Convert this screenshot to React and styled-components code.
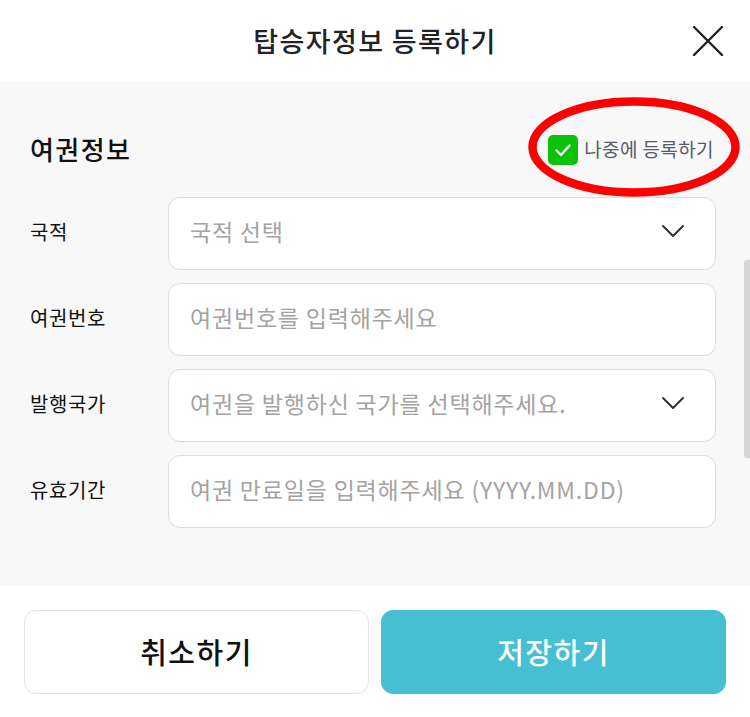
import React from "react";
import styled, { createGlobalStyle } from "styled-components";

const Global = createGlobalStyle`
  html, body { margin: 0; padding: 0; background: #fff; }
  body { font-family: "Noto Sans CJK KR", "Noto Sans", sans-serif; }
  * { box-sizing: border-box; }
`;

const Modal = styled.div`
  width: 750px;
  height: 717px;
  display: flex;
  flex-direction: column;
  background: #fff;
  position: relative;
  overflow: hidden;
`;

const Header = styled.header`
  height: 82px;
  flex: none;
  display: flex;
  align-items: center;
  justify-content: center;
  position: relative;
  background: #fff;
`;

const Title = styled.h1`
  margin: 0 0 2px 0;
  font-size: 27px;
  font-weight: 500;
  color: #222;
  letter-spacing: 1.4px;
`;

const CloseButton = styled.button`
  position: absolute;
  right: 26px;
  top: 25px;
  width: 32px;
  height: 32px;
  padding: 0;
  border: none;
  background: transparent;
  display: flex;
  align-items: center;
  justify-content: center;
`;

const Body = styled.main`
  flex: 1;
  background: #f8f8f8;
  padding: 46px 34px 0 30px;
  position: relative;
`;

const SectionHead = styled.div`
  display: flex;
  align-items: center;
  justify-content: space-between;
  height: 44px;
  margin-bottom: 25px;
  position: relative;
`;

const SectionTitle = styled.h2`
  margin: 0 0 3px 0;
  font-size: 26px;
  font-weight: 500;
  color: #111;
  letter-spacing: 1.4px;
`;

const Later = styled.label`
  display: flex;
  align-items: center;
  gap: 6px;
  font-size: 19px;
  color: #555b6a;
  letter-spacing: 0.4px;
  margin-right: 2px;
  margin-bottom: 4px;
`;

const Check = styled.span`
  width: 30px;
  height: 30px;
  border-radius: 5px;
  background: #0ac20a;
  display: flex;
  align-items: center;
  justify-content: center;
  margin-top: 4px;
`;

const Ellipse = styled.svg`
  position: absolute;
  right: -24px;
  top: -31px;
  pointer-events: none;
`;

const Rows = styled.div`
  display: flex;
  flex-direction: column;
  gap: 13px;
`;

const Row = styled.div`
  display: grid;
  grid-template-columns: 138px 1fr;
  align-items: center;
`;

const Label = styled.span`
  font-size: 20px;
  color: #111;
  letter-spacing: 0.6px;
  margin-top: -5px;
`;

const Field = styled.div`
  height: 73px;
  border: 1px solid #dcdcdc;
  border-radius: 12px;
  background: #fff;
  display: flex;
  align-items: center;
  justify-content: space-between;
  padding: 0 30px 5px 21px;
`;

const Placeholder = styled.span`
  font-size: 23px;
  color: #a3a3a3;
  letter-spacing: 0.8px;
`;

const Scrollbar = styled.div`
  position: absolute;
  right: 0;
  top: 178px;
  width: 6px;
  height: 198px;
  border-radius: 3px 0 0 3px;
  background: #d6d6d6;
`;

const Footer = styled.footer`
  height: 131px;
  flex: none;
  background: #fff;
  display: grid;
  grid-template-columns: 1fr 1fr;
  gap: 12px;
  padding: 24px 24px 23px 24px;
`;

const Button = styled.button`
  height: 84px;
  border-radius: 12px;
  font-family: inherit;
  font-size: 29px;
  font-weight: 500;
  letter-spacing: 1.5px;
  padding-bottom: 4px;
  border: 1px solid ${(p) => (p.$primary ? "#45bfd1" : "#e4e4e4")};
  background: ${(p) => (p.$primary ? "#45bfd1" : "#fff")};
  color: ${(p) => (p.$primary ? "#fff" : "#111")};
`;

const Chevron = () => (
  <svg width="24" height="14" viewBox="0 0 24 14" fill="none">
    <path d="M2 2 L12 12 L22 2" stroke="#333" strokeWidth="2" strokeLinecap="round" strokeLinejoin="round" />
  </svg>
);

const rows = [
  { label: "국적", ph: "국적 선택", select: true },
  { label: "여권번호", ph: "여권번호를 입력해주세요" },
  { label: "발행국가", ph: "여권을 발행하신 국가를 선택해주세요.", select: true },
  { label: "유효기간", ph: "여권 만료일을 입력해주세요 (YYYY.MM.DD)" },
];

export default function App() {
  return (
    <>
      <Global />
      <Modal>
        <Header>
          <Title>탑승자정보 등록하기</Title>
          <CloseButton aria-label="닫기">
            <svg width="32" height="32" viewBox="0 0 32 32">
              <path d="M2 2 L30 30 M30 2 L2 30" stroke="#222" strokeWidth="2.4" strokeLinecap="round" />
            </svg>
          </CloseButton>
        </Header>
        <Body>
          <SectionHead>
            <SectionTitle>여권정보</SectionTitle>
            <Later>
              <Check>
                <svg width="20" height="20" viewBox="0 0 20 20">
                  <path d="M3.5 10.5 L8 15 L16.5 5.5" stroke="#fff" strokeWidth="2.4" fill="none" strokeLinecap="round" strokeLinejoin="round" />
                </svg>
              </Check>
              나중에 등록하기
            </Later>
            <Ellipse width="212" height="100" viewBox="0 0 212 100">
              <ellipse cx="106" cy="50" rx="101.5" ry="45.5" fill="none" stroke="#f00" strokeWidth="8.5" />
            </Ellipse>
          </SectionHead>
          <Rows>
            {rows.map((r) => (
              <Row key={r.label}>
                <Label>{r.label}</Label>
                <Field>
                  <Placeholder>{r.ph}</Placeholder>
                  {r.select && <Chevron />}
                </Field>
              </Row>
            ))}
          </Rows>
          <Scrollbar />
        </Body>
        <Footer>
          <Button>취소하기</Button>
          <Button $primary>저장하기</Button>
        </Footer>
      </Modal>
    </>
  );
}
